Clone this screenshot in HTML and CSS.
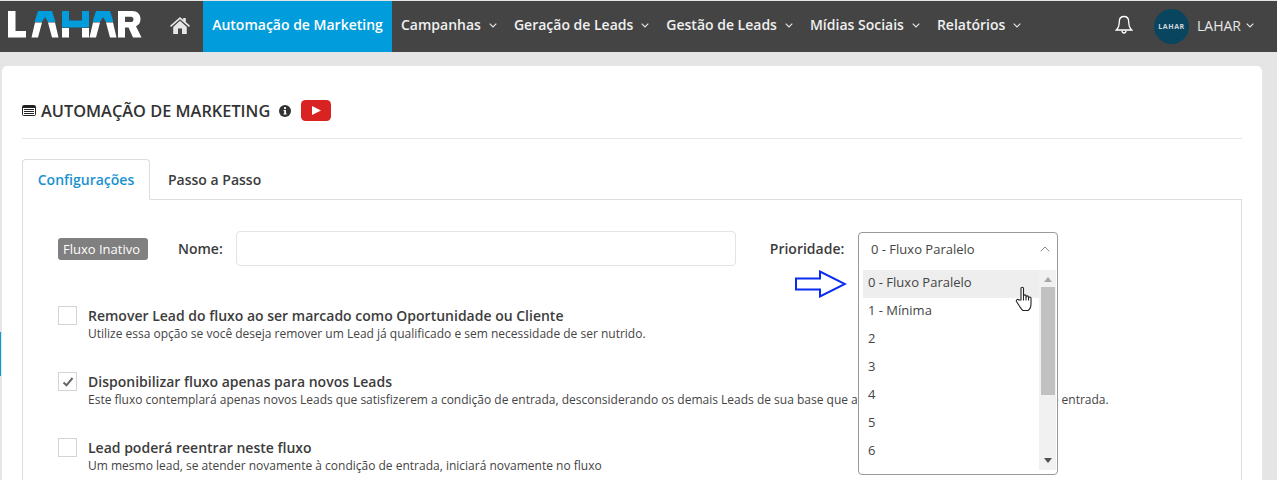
FILE: index.html
```html
<!DOCTYPE html>
<html lang="pt-BR">
<head>
<meta charset="utf-8">
<title>Automação de Marketing</title>
<link rel="stylesheet" href="styles.css">
</head>
<body>
<nav class="nav">
  <div class="logo">
    <svg viewBox="0 0 134 27" width="134" height="27" role="img" aria-label="LAHAR">
      <path fill="#fff" d="M0 0H7.500V20H18V26.500H0Z"/>
      <g>
        <path fill="#fff" d="M27 11.500H34L30 26.500H23.500ZM40 11.500H47L50.500 26.500H44Z"/>
        <path fill="#019cdb" d="M30 0H44L47.500 11H40L37 6L34 11H26.500Z"/>
      </g>
      <path fill="#fff" d="M54 17H61V26.500H54ZM74 17H81V26.500H74Z"/>
      <path fill="#019cdb" d="M54 0H61V9.500H74V0H81V16.500H54Z"/>
      <g transform="translate(58 0)">
        <path fill="#fff" d="M27 11.500H34L30 26.500H23.500ZM40 11.500H47L50.500 26.500H44Z"/>
        <path fill="#019cdb" d="M30 0H44L47.500 11H40L37 6L34 11H26.500Z"/>
      </g>
      <path fill="#fff" fill-rule="evenodd" d="M110 0H124C129.500 0 132.500 3.500 132.500 8C132.500 11.500 131 14 128 15.300L133.500 26.500H125L120.500 16.500H117V26.500H110ZM117 5.800V11H123C124.500 11 125.500 9.800 125.500 8.400C125.500 7 124.500 5.800 123 5.800Z"/>
    </svg>
  </div>
  <svg class="home" viewBox="0 0 20 17" width="20" height="17"><path fill="#e6e6e6" d="M10 0 L13.200 2.800 V1 H15.800 V5 L20 8.800 L19 10 L10 2.200 L1 10 L0 8.800 Z M3.200 10 L10 3.800 L16.800 10 V17 H12 V11.500 H8 V17 H3.200 Z"/></svg>
  <a class="item active">Automação de Marketing</a>
  <a class="item">Campanhas <svg class="chev" viewBox="0 0 8 5"><path d="M.7.7 4 4 7.300.7"/></svg></a>
  <a class="item">Geração de Leads <svg class="chev" viewBox="0 0 8 5"><path d="M.7.7 4 4 7.300.7"/></svg></a>
  <a class="item">Gestão de Leads <svg class="chev" viewBox="0 0 8 5"><path d="M.7.7 4 4 7.300.7"/></svg></a>
  <a class="item">Mídias Sociais <svg class="chev" viewBox="0 0 8 5"><path d="M.7.7 4 4 7.300.7"/></svg></a>
  <a class="item">Relatórios <svg class="chev" viewBox="0 0 8 5"><path d="M.7.7 4 4 7.300.7"/></svg></a>
  <div class="user">
    <svg class="bell" viewBox="0 0 18 20" width="18" height="20"><path fill="none" stroke="#fff" stroke-width="1.300" d="M9 1.500c-3.200 0-4.700 2.400-4.700 5.300 0 4.400-1 6.400-3 8.200h15.400c-2-1.800-3-3.800-3-8.200C13.700 3.900 12.200 1.500 9 1.500z"/><path fill="none" stroke="#fff" stroke-width="1.300" d="M7 15.500c0 1.500.9 2.500 2 2.500s2-1 2-2.500"/></svg>
    <div class="avatar">LAHAR</div>
    <span class="uname">LAHAR</span>
    <svg class="chev user-chev" viewBox="0 0 8 5"><path d="M.7.7 4 4 7.300.7"/></svg>
  </div>
</nav>
<main class="card">
  <h1 class="title">
    <svg class="list" viewBox="0 0 14 11" width="14" height="11"><rect x=".5" y=".5" width="13" height="10" rx="1" fill="#fff" stroke="#222"/><path stroke="#222" stroke-width="2" d="M1 2h12"/><path stroke="#222" d="M2 4.500h10M2 6.500h10M2 8.500h10"/></svg>
    <span>AUTOMAÇÃO DE MARKETING</span>
    <svg class="info" viewBox="0 0 12 12" width="12" height="12"><circle cx="6" cy="6" r="6" fill="#333"/><rect x="5" y="2.200" width="2" height="1.800" fill="#fff"/><path fill="#fff" d="M4.500 5h2.500v3.500h.7v1H4.500v-1h.7V6h-.7z"/></svg>
    <svg class="yt" viewBox="0 0 30 21" width="30" height="21"><rect width="30" height="21" rx="4.500" fill="#d92323"/><path fill="#fff" d="M11 6l9 4.500-9 4.500z"/></svg>
  </h1>
  <div class="tabs">
    <a class="tab current">Configurações</a>
    <a class="tab">Passo a Passo</a>
  </div>
  <section class="pane">
    <div class="row">
      <span class="badge">Fluxo Inativo</span>
      <label class="lbl name">Nome:</label>
      <div class="input"></div>
      <label class="lbl prio">Prioridade:</label>
    </div>
    <div class="opt first">
      <span class="check"></span>
      <div class="otext"><div class="otitle">Remover Lead do fluxo ao ser marcado como Oportunidade ou Cliente</div>
      <div class="odesc">Utilize essa opção se você deseja remover um Lead já qualificado e sem necessidade de ser nutrido.</div></div>
    </div>
    <div class="opt">
      <span class="check"><svg viewBox="0 0 12 10" width="12" height="10"><path fill="none" stroke="#666" stroke-width="2" d="M1.500 5.500 4.500 8.300 10.500 1"/></svg></span>
      <div class="otext"><div class="otitle">Disponibilizar fluxo apenas para novos Leads</div>
      <div class="odesc">Este fluxo contemplará apenas novos Leads que satisfizerem a condição de entrada, desconsiderando os demais Leads de sua base que atualmente satisfazem a condição de entrada.</div></div>
    </div>
    <div class="opt">
      <span class="check"></span>
      <div class="otext"><div class="otitle">Lead poderá reentrar neste fluxo</div>
      <div class="odesc">Um mesmo lead, se atender novamente à condição de entrada, iniciará novamente no fluxo</div></div>
    </div>
  </section>
</main>
<div class="sideline"></div>
<svg class="arrow" viewBox="0 0 52 28" width="52" height="28"><path fill="#fff" stroke="#0a2bf0" stroke-width="2" d="M1 8.500H25V1.500L50 14 25 26.500V19.500H1Z"/></svg>
<div class="select">
  <div class="sel-head"><span>0 - Fluxo Paralelo</span><svg class="up" viewBox="0 0 10 6"><path d="M.7 5.300 5 1l4.300 4.300"/></svg></div>
  <div class="sel-body">
    <ul class="options">
      <li class="hover">0 - Fluxo Paralelo</li>
      <li>1 - Mínima</li>
      <li>2</li>
      <li>3</li>
      <li>4</li>
      <li>5</li>
      <li>6</li>
    </ul>
    <div class="scroll">
      <svg class="sarrow" viewBox="0 0 8 5" width="8" height="5"><path fill="#a8a8a8" d="M0 5 4 0l4 5z"/></svg>
      <div class="thumb"></div>
      <svg class="sarrow bottom" viewBox="0 0 8 5" width="8" height="5"><path fill="#505050" d="M0 0l4 5 4-5z"/></svg>
    </div>
  </div>
</div>
<svg class="hand" viewBox="0.500 0 16 25" width="18" height="25"><path fill="#fff" stroke="#222" stroke-width="1.100" stroke-linejoin="round" d="M5.500 14V2.500C5.500 .8 8 .8 8 2.500V10c0-1.500 2.500-1.500 2.500 0v1c0-1.500 2.500-1.500 2.500 0v1c0-1.300 2.500-1.300 2.500.3V18c0 3.500-1.500 5.500-3 6.500H7.500c-1.500-1-2-2-3-3.500L1 15.500c-.8-1.700 1.200-2.800 2.500-1.500z"/><path stroke="#222" fill="none" d="M8 10v4.500M10.500 11v3.500M13 12v2.500"/></svg>
</body>
</html>
```
FILE: styles.css
```css
* { box-sizing: border-box; }
html, body { margin: 0; height: 480px; overflow: hidden; }
body {
  position: relative;
  background: #e5e5e5;
  font-family: "Open Sans", sans-serif;
  color: #333;
  padding-top: 1px;
}
.nav {
  height: 51px;
  background: #444;
  display: flex;
  align-items: stretch;
  color: #fff;
}
.logo {
  width: 170px;
  padding: 10px 0 0 8px;
}
.logo svg { display: block; }
.home { align-self: center; margin-right: 13px; margin-bottom: 3px; }
.item {
  display: flex;
  align-items: center;
  gap: 8px;
  padding: 0 8px 4px 9px;
  font-size: 14px;
  font-weight: 600;
  color: #f0f0f0;
  white-space: nowrap;
}
.item.active { background: #019cdb; color: #fff; width: 189px; justify-content: center; padding: 0 0 4px; }
.chev { width: 8px; height: 5px; fill: none; stroke: #e8e8e8; stroke-width: 1.100; margin-top: 2px; }
.user-chev { margin: 0 0 3px; }
.user { margin-left: auto; display: flex; align-items: center; padding-right: 23px; }
.bell { margin-right: 21px; margin-bottom: 3px; }
.avatar {
  width: 35px;
  height: 35px;
  border-radius: 50%;
  background: #0a4560;
  color: #cfd8dc;
  font-size: 7px;
  letter-spacing: .6px;
  font-weight: 700;
  display: flex;
  align-items: center;
  justify-content: center;
  margin-right: 8px;
}
.uname { font-size: 14px; color: #e8e8e8; margin-right: 5px; margin-bottom: 2px; }
.card {
  margin: 14px 0 0 2px;
  width: 1260px;
  height: 420px;
  background: #fff;
  border-radius: 5px 5px 0 0;
  padding: 0 20px;
}
.title {
  margin: 0;
  height: 73px;
  display: flex;
  align-items: center;
  border-bottom: 1px solid #e5e5e5;
  font-size: 16.35px;
  font-weight: 600;
  color: #333;
  padding-top: 17px;
}
.list { margin-right: 5px; }
.info { margin-left: 9px; }
.yt { margin-left: 10px; }
.tabs { display: flex; margin-top: 20px; height: 41px; }
.tab {
  padding: 0 18px;
  height: 41px;
  display: flex;
  align-items: center;
  font-size: 14px;
  font-weight: 600;
  color: #3c3c3c;
  border-bottom: 1px solid #ddd;
  flex: 0 0 auto;
}
.tab.current {
  color: #1a92d0;
  width: 128px;
  padding: 0;
  justify-content: center;
  border: 1px solid #ddd;
  border-bottom-color: #fff;
  border-radius: 4px 4px 0 0;
}
.tabs::after { content: ""; flex: 1; border-bottom: 1px solid #ddd; }
.pane {
  border-left: 1px solid #ddd;
  border-right: 1px solid #ddd;
  height: 300px;
  padding: 32px 35px 0;
}
.row { display: flex; align-items: center; height: 33px; }
.badge {
  background: #808080;
  color: #fff;
  font-size: 13px;
  border-radius: 3px;
  width: 90px;
  height: 22px;
  display: flex;
  align-items: center;
  padding-left: 5px;
}
.lbl { font-size: 14px; font-weight: 600; color: #3c3c3c; }
.name { margin-left: 30px; }
.input {
  width: 500px;
  height: 35px;
  margin-left: 13px;
  border: 1px solid #e3e3e3;
  border-radius: 4px;
}
.prio { margin-left: 34px; }
.opt { display: flex; gap: 11px; margin-top: 26px; height: 40px; }
.opt.first { margin-top: 41px; }
.otext { padding-top: 1px; }
.check {
  width: 19px;
  height: 19px;
  flex: none;
  border: 1px solid #d4d4d4;
  display: flex;
  align-items: center;
  justify-content: center;
}
.otitle { font-size: 14px; font-weight: 600; color: #3c3c3c; line-height: 18px; white-space: nowrap; }
.odesc { font-size: 12px; color: #444; line-height: 18px; white-space: nowrap; }
.sideline { position: absolute; left: 0; top: 332px; width: 1px; height: 44px; background: #019cdb; }
.arrow { position: absolute; left: 795px; top: 270px; }
.select {
  position: absolute;
  left: 858px;
  top: 232px;
  width: 200px;
  height: 243px;
  background: #fff;
  border: 1px solid #999;
  border-radius: 4px;
  font-size: 13px;
  color: #444;
}
.sel-head { height: 36px; display: flex; align-items: center; justify-content: space-between; padding: 0 7px 5px 12px; }
.up { width: 10px; height: 6px; fill: none; stroke: #888; stroke-width: 1; }
.sel-body { display: flex; height: 200px; margin: 1px 0 0 4px; }
.options { list-style: none; margin: 0; padding: 0; flex: 1; }
.options li { height: 28px; line-height: 24px; padding-left: 5px; }
.options li.hover { background: #eee; }
.scroll { position: relative; width: 17px; background: #f1f1f1; flex: none; margin-right: 1px; }
.sarrow { position: absolute; left: 5px; top: 7px; }
.sarrow.bottom { top: auto; bottom: 7px; }
.thumb { position: absolute; left: 2px; right: 1px; top: 17px; height: 108px; background: #c1c1c1; }
.hand { position: absolute; left: 1015px; top: 286px; }
```
